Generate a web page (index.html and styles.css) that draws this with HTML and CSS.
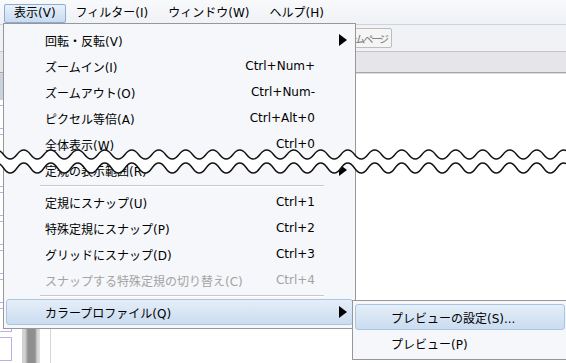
FILE: index.html
```html
<!DOCTYPE html>
<html lang="ja">
<head>
    <meta charset="UTF-8">
    <title>表示メニュー</title>
    <link rel="stylesheet" href="styles.css">
</head>
<body>
    <div class="app">
        <!-- メニューバー -->
        <div class="menubar">
            <span class="menubar-item open">表示(V)</span>
            <span class="menubar-item">フィルター(I)</span>
            <span class="menubar-item">ウィンドウ(W)</span>
            <span class="menubar-item">ヘルプ(H)</span>
        </div>

        <!-- ツールバー -->
        <div class="toolbar">
            <button class="tool-button">ホームページ</button>
        </div>

        <div class="tabbar"></div>

        <div class="workspace">
            <div class="side-panel">
                <div class="panel-head"></div>
                <div class="layer"></div>
                <div class="layer"></div>
                <div class="layer"></div>
                <div class="layer"></div>
                <div class="layer"></div>
                <div class="layer"></div>
                <div class="layer"></div>
                <div class="layer"></div>
                <div class="layer"></div>
            </div>
            <div class="splitter"></div>
            <div class="canvas"></div>
        </div>
    </div>

    <!-- 表示メニュー -->
    <div class="menu main-menu">
        <div class="menu-item"><span>回転・反転(V)</span><span class="shortcut"></span><span class="arrow"></span></div>
        <div class="menu-item"><span>ズームイン(I)</span><span class="shortcut">Ctrl+Num+</span></div>
        <div class="menu-item"><span>ズームアウト(O)</span><span class="shortcut">Ctrl+Num-</span></div>
        <div class="menu-item"><span>ピクセル等倍(A)</span><span class="shortcut">Ctrl+Alt+0</span></div>
        <div class="menu-item"><span>全体表示(W)</span><span class="shortcut">Ctrl+0</span></div>
        <div class="menu-item"><span>定規の表示範囲(R)</span><span class="shortcut"></span><span class="arrow"></span></div>
        <div class="separator"></div>
        <div class="menu-item"><span>定規にスナップ(U)</span><span class="shortcut">Ctrl+1</span></div>
        <div class="menu-item"><span>特殊定規にスナップ(P)</span><span class="shortcut">Ctrl+2</span></div>
        <div class="menu-item"><span>グリッドにスナップ(D)</span><span class="shortcut">Ctrl+3</span></div>
        <div class="menu-item disabled"><span>スナップする特殊定規の切り替え(C)</span><span class="shortcut">Ctrl+4</span></div>
        <div class="separator"></div>
        <div class="menu-item hover"><span>カラープロファイル(Q)</span><span class="shortcut"></span><span class="arrow"></span></div>
    </div>

    <!-- サブメニュー -->
    <div class="menu sub-menu">
        <div class="menu-item hover"><span>プレビューの設定(S)...</span></div>
        <div class="menu-item"><span>プレビュー(P)</span></div>
    </div>

    <!-- 省略の波線 -->
    <svg class="tear" width="566" height="363" viewBox="0 0 566 363">
        <path fill="#fff" d="M-10,154.5 q6.75,-9 13.5,0 t13.5,0 t13.5,0 t13.5,0 t13.5,0 t13.5,0 t13.5,0 t13.5,0 t13.5,0 t13.5,0 t13.5,0 t13.5,0 t13.5,0 t13.5,0 t13.5,0 t13.5,0 t13.5,0 t13.5,0 t13.5,0 t13.5,0 t13.5,0 t13.5,0 t13.5,0 t13.5,0 t13.5,0 t13.5,0 t13.5,0 t13.5,0 t13.5,0 t13.5,0 t13.5,0 t13.5,0 t13.5,0 t13.5,0 t13.5,0 t13.5,0 t13.5,0 t13.5,0 t13.5,0 t13.5,0 t13.5,0 t13.5,0 t13.5,0 t13.5,0 t13.5,0 t13.5,0 L611,168 q-6.75,10 -13.5,0 t-13.5,0 t-13.5,0 t-13.5,0 t-13.5,0 t-13.5,0 t-13.5,0 t-13.5,0 t-13.5,0 t-13.5,0 t-13.5,0 t-13.5,0 t-13.5,0 t-13.5,0 t-13.5,0 t-13.5,0 t-13.5,0 t-13.5,0 t-13.5,0 t-13.5,0 t-13.5,0 t-13.5,0 t-13.5,0 t-13.5,0 t-13.5,0 t-13.5,0 t-13.5,0 t-13.5,0 t-13.5,0 t-13.5,0 t-13.5,0 t-13.5,0 t-13.5,0 t-13.5,0 t-13.5,0 t-13.5,0 t-13.5,0 t-13.5,0 t-13.5,0 t-13.5,0 t-13.5,0 t-13.5,0 t-13.5,0 t-13.5,0 t-13.5,0 t-13.5,0 Z"/>
        <path class="wave" d="M-10,154.5 q6.75,-9 13.5,0 t13.5,0 t13.5,0 t13.5,0 t13.5,0 t13.5,0 t13.5,0 t13.5,0 t13.5,0 t13.5,0 t13.5,0 t13.5,0 t13.5,0 t13.5,0 t13.5,0 t13.5,0 t13.5,0 t13.5,0 t13.5,0 t13.5,0 t13.5,0 t13.5,0 t13.5,0 t13.5,0 t13.5,0 t13.5,0 t13.5,0 t13.5,0 t13.5,0 t13.5,0 t13.5,0 t13.5,0 t13.5,0 t13.5,0 t13.5,0 t13.5,0 t13.5,0 t13.5,0 t13.5,0 t13.5,0 t13.5,0 t13.5,0 t13.5,0 t13.5,0 t13.5,0 t13.5,0"/>
        <path class="wave" d="M-10,168 q6.75,-10 13.5,0 t13.5,0 t13.5,0 t13.5,0 t13.5,0 t13.5,0 t13.5,0 t13.5,0 t13.5,0 t13.5,0 t13.5,0 t13.5,0 t13.5,0 t13.5,0 t13.5,0 t13.5,0 t13.5,0 t13.5,0 t13.5,0 t13.5,0 t13.5,0 t13.5,0 t13.5,0 t13.5,0 t13.5,0 t13.5,0 t13.5,0 t13.5,0 t13.5,0 t13.5,0 t13.5,0 t13.5,0 t13.5,0 t13.5,0 t13.5,0 t13.5,0 t13.5,0 t13.5,0 t13.5,0 t13.5,0 t13.5,0 t13.5,0 t13.5,0 t13.5,0 t13.5,0 t13.5,0"/>
    </svg>
</body>
</html>
```

FILE: styles.css
```css
body {
    margin: 0;
    width: 566px;
    height: 363px;
    overflow: hidden;
    position: relative;
    font-family: "DejaVu Sans", "Noto Sans CJK JP", sans-serif;
    font-size: 12px;
    color: #000;
    background: #fff;
}

.app {
    display: flex;
    flex-direction: column;
    height: 363px;
}

/* メニューバー */
.menubar {
    height: 24px;
    display: flex;
    align-items: flex-start;
    padding: 4px 0 0 4px;
    box-sizing: border-box;
    background: linear-gradient(#f8f9fb, #eff2f6);
}

.menubar-item {
    height: 19px;
    line-height: 17px;
    padding: 0 9px;
    border: 1px solid transparent;
    border-radius: 2px;
    box-sizing: border-box;
    white-space: nowrap;
}

.menubar-item.open {
    background: linear-gradient(#e8f1fb, #c7dbf0);
    border-color: #8fabcd;
}

/* ツールバー */
.toolbar {
    height: 27px;
    box-sizing: border-box;
    border-top: 1px solid #d0d4da;
    background: #f0f2f5;
    display: flex;
    align-items: center;
}

.tool-button {
    margin-left: 322px;
    width: 70px;
    height: 20px;
    padding: 0 4px 0 0;
    text-align: right;
    font-family: "Noto Sans CJK JP", sans-serif;
    font-size: 10px;
    letter-spacing: -2px;
    color: #707070;
    background: #f5f5f5;
    border: 1px solid #bdbdbd;
    border-radius: 2px;
}

.tabbar {
    height: 22px;
    box-sizing: border-box;
    border-top: 1px solid #c6c6c6;
    border-bottom: 1px solid #a6a6a6;
    background: #e6e6ea;
    box-shadow: 0 1px 0 #dadada;
}

.workspace {
    flex: 1;
    display: flex;
    margin-top: 1px;
}

.side-panel {
    width: 22px;
    background: #fff;
}

.panel-head {
    height: 26px;
    background: #c9d2de;
}

.layer {
    height: 22px;
    margin: 5px 10px 0 0;
    border: 1px solid #bab1ea;
    border-left: none;
}

.splitter {
    width: 18px;
    background: linear-gradient(to right, #d2d2d2 0, #d2d2d2 3px, #8f8f8f 6px, #8f8f8f 13px, #cfcfcf 15px, #e2e2e2 18px);
}

.canvas {
    flex: 1;
    margin-left: 10px;
    border-left: 1px solid #d6d6d6;
    background: #fff;
}

/* ドロップダウンメニュー */
.menu {
    position: absolute;
    box-sizing: border-box;
    background: #f5f7fa;
    border: 1px solid #979797;
    padding: 3px 2px;
}

.main-menu {
    left: 3px;
    top: 23px;
    width: 353px;
}

.sub-menu {
    left: 352px;
    top: 300px;
    width: 216px;
}

.menu-item {
    display: grid;
    grid-template-columns: 1fr auto 32px;
    align-items: center;
    height: 26px;
    padding: 0 5px 0 38px;
    box-sizing: border-box;
    border: 1px solid transparent;
    border-radius: 3px;
    white-space: nowrap;
}

.sub-menu .menu-item {
    padding-left: 35px;
}

.menu-item.hover {
    background: linear-gradient(#e5eef8, #cadcf0);
    border-color: #a9c5e3;
}

.menu-item.disabled {
    color: #a3a3a3;
}

.shortcut {
    text-align: right;
}

.arrow {
    justify-self: end;
    width: 0;
    height: 0;
    border-left: 8px solid #000;
    border-top: 6px solid transparent;
    border-bottom: 6px solid transparent;
}

.separator {
    height: 1px;
    margin: 2px 29px 2px 34px;
    border-top: 1px solid #c9c9c9;
    background: #fff;
}

/* 省略の波線 */
.tear {
    position: absolute;
    left: 0;
    top: 0;
    pointer-events: none;
}

.wave {
    fill: none;
    stroke: #111;
    stroke-width: 1.4;
}
```
